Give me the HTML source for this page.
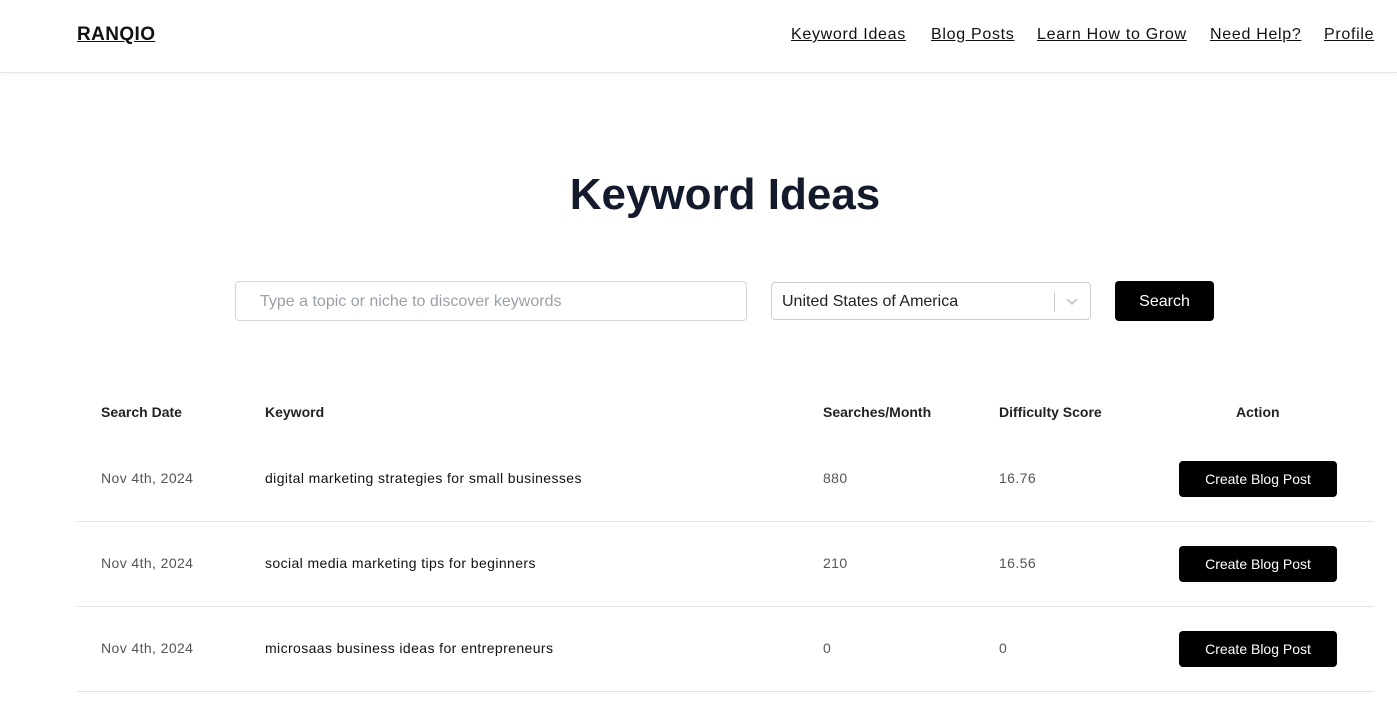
<!DOCTYPE html>
<html><head><style>
*{box-sizing:border-box;margin:0;padding:0}
body{width:1397px;height:704px;overflow:hidden;background:#fff;font-family:"Liberation Sans",sans-serif;color:#111;position:relative}
.hdr{position:absolute;left:0;top:0;width:1397px;height:73px;border-bottom:1px solid #e5e5e5;box-shadow:0 2px 3px rgba(0,0,0,.04)}
.logo{position:absolute;left:77px;top:24px;font-size:19px;font-weight:700;text-decoration:underline;letter-spacing:0.4px}
.nav a{position:absolute;top:26px;font-size:16px;color:#111;text-decoration:underline;letter-spacing:0.7px}
h1{position:absolute;left:0;width:1450px;text-align:center;top:170px;font-size:44px;font-weight:700;color:#131a2b}
.in{position:absolute;left:235px;top:281px;width:512px;height:40px;border:1px solid #d6d6d6;border-radius:4px;padding:11px 24px;font-size:16px;color:#9ba0a8}
.sel{position:absolute;left:771px;top:282px;width:320px;height:38px;border:1px solid #ccc;border-radius:4px;padding:10px 10px;font-size:16px;color:#222}
.sel .sep{position:absolute;left:282px;top:9px;width:1px;height:20px;background:#ccc}
.sel svg{position:absolute;left:293px;top:13px}
.btn{position:absolute;left:1115px;top:281px;width:99px;height:40px;background:#000;color:#fff;border-radius:4px;font-size:16px;text-align:center;line-height:41px}
.th{position:absolute;top:404px;font-size:14px;font-weight:700;color:#222}
.row{position:absolute;left:77px;width:1296px;height:85px;border-bottom:1px solid #e2e2e2}
.row span{position:absolute;top:33px;font-size:14px;letter-spacing:0.4px}
.g{color:#555}
.cb{position:absolute;left:1102px;top:24px;width:158px;height:36px;background:#000;color:#fff;border-radius:4px;font-size:14px;text-align:center;line-height:36px}
</style></head><body>
<div class="hdr"><div class="logo">RANQIO</div>
<div class="nav"><a style="left:791px">Keyword Ideas</a><a style="left:931px">Blog Posts</a><a style="left:1037px">Learn How to Grow</a><a style="left:1210px">Need Help?</a><a style="left:1324px">Profile</a></div></div>
<h1>Keyword Ideas</h1>
<div class="in">Type a topic or niche to discover keywords</div>
<div class="sel">United States of America<div class="sep"></div><svg width="14" height="12" viewBox="0 0 14 12"><path d="M2 3l5 5 5-5" stroke="#bbb" stroke-width="1.5" fill="none"/></svg></div>
<div class="btn">Search</div>
<div class="th" style="left:101px">Search Date</div>
<div class="th" style="left:265px">Keyword</div>
<div class="th" style="left:823px">Searches/Month</div>
<div class="th" style="left:999px">Difficulty Score</div>
<div class="th" style="left:1236px">Action</div>
<div class="row" style="top:437px"><span class="g" style="left:24px">Nov 4th, 2024</span><span style="left:188px">digital marketing strategies for small businesses</span><span class="g" style="left:746px">880</span><span class="g" style="left:922px">16.76</span><div class="cb">Create Blog Post</div></div>
<div class="row" style="top:522px"><span class="g" style="left:24px">Nov 4th, 2024</span><span style="left:188px">social media marketing tips for beginners</span><span class="g" style="left:746px">210</span><span class="g" style="left:922px">16.56</span><div class="cb">Create Blog Post</div></div>
<div class="row" style="top:607px"><span class="g" style="left:24px">Nov 4th, 2024</span><span style="left:188px">microsaas business ideas for entrepreneurs</span><span class="g" style="left:746px">0</span><span class="g" style="left:922px">0</span><div class="cb">Create Blog Post</div></div>
</body></html>
